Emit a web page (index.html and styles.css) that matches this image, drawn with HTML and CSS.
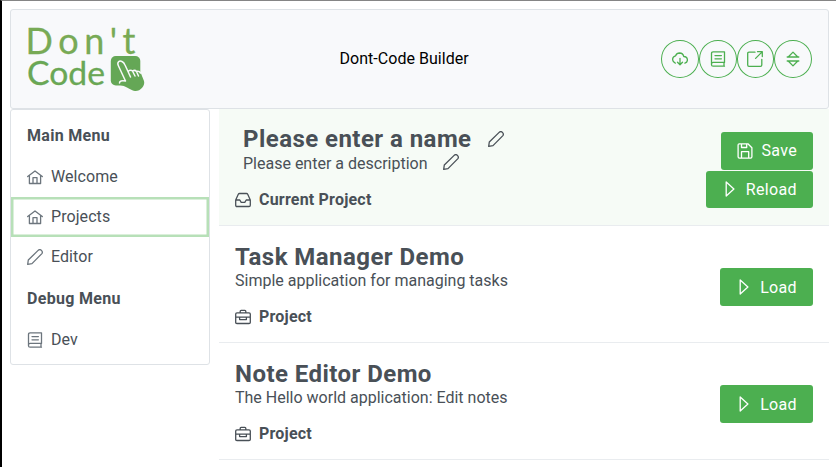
FILE: index.html
```html
<!DOCTYPE html>
<html lang="en">
<head>
<meta charset="utf-8">
<title>Dont-Code Builder</title>
<link rel="stylesheet" href="styles.css">
</head>
<body>
<svg width="0" height="0" class="defs">
  <symbol id="home" viewBox="0 0 16 16"><path d="M.7 7.500 8 2 15.300 7.500M2.400 6.500v8h11.200v-8M6 14.300V8.600h4v5.700"/></symbol>
  <symbol id="pencil" viewBox="0 0 16 16"><path d="M.7 15.300 1.300 11 11.400 1.100Q13 0 14.400 1.400 16 3 14.900 4.600L5 14.600Z"/></symbol>
  <symbol id="book" viewBox="0 0 16 16"><path d="M14.500 11.400V.8H3.100Q1.500.8 1.500 2.400v11.300Q1.500 15.200 3.100 15.200H14.500M14 11.400v3.800M14.500 11.400H3.100Q1.500 11.400 1.500 13.200M5 4.600h6.400M5 7.800h6.400"/></symbol>
  <symbol id="cloud" viewBox="0 0 16 16"><path d="M3.300 12.200Q.6 11.200.6 8.300.7 5.300 3.600 4.800 4.700 2 7.600 2q3.300.1 4.200 3.500 3.600.2 3.600 3.600 0 2.400-2.500 3.100M8 7.300v6.400M5.500 11.300 8 13.800l2.500-2.500"/></symbol>
  <symbol id="external" viewBox="0 0 16 16"><path d="M8 1.200H2Q.7 1.200.7 2.500V14Q.7 15.300 2 15.300h11.500q1.300 0 1.300-1.300V8.300M10.500.7h4.800v4.800M15.100.9 8.600 7.400"/></symbol>
  <symbol id="sort" viewBox="0 0 16 16"><path d="M3.200 6 8 1.100 12.800 6ZM3.200 10 8 14.900 12.800 10ZM2.200 6h11.600M2.200 10h11.600"/></symbol>
  <symbol id="inbox" viewBox="0 0 16 16"><path d="M.7 8 3.300 2.300Q3.700 1.500 4.600 1.500h6.800q.9 0 1.300.8L15.300 8v5.200q0 1.300-1.300 1.300H2Q.7 14.500.7 13.200ZM.7 8h4.100l1.400 2.300h3.600L11.200 8h4.100"/></symbol>
  <symbol id="briefcase" viewBox="0 0 16 16"><path d="M2 3.800h12q1.300 0 1.300 1.300v8.300q0 1.100-1.300 1.100H2Q.7 14.500.7 13.400V5.100Q.7 3.800 2 3.800ZM5.200 3.500V2.300q0-.9.9-.9h3.800q.9 0 .9.900v1.200M.7 8.200h14.600M4.600 8.400v2.200h6.800V8.400"/></symbol>
  <symbol id="save" viewBox="0 0 16 16"><path d="M2.400.8h8.500l4 4v9q0 1.400-1.400 1.400h-11Q1.100 15.200 1.100 13.800V2.200Q1.100.8 2.400.8ZM4.500 15V8.700h7.200V15M4.500 1v3.500h5.200V1"/></symbol>
  <symbol id="play" viewBox="0 0 16 16"><path d="M4.200.9v14.200L11.900 8Z"/></symbol>
</svg>
<div class="app">
  <header class="toolbar">
    <svg class="logo" width="124" height="84" viewBox="-4 -8 124 84">
      <text class="logo-top" x="-1.500" y="28.500" textLength="110">Don't</text>
      <text class="logo-bottom" x="0" y="60.300" textLength="78" lengthAdjust="spacingAndGlyphs">Code</text>
      <rect class="logo-tile" x="83.800" y="31" width="29.500" height="29.500" rx="5"/>
      <path class="logo-hand" d="M91.500 41C89.500 37 92.500 35 95 36.500Q97 37.500 98 40L101 46.500Q103.500 44.500 105.500 46 108 44.500 109.500 46.500 112.500 45.500 114 48.500L117 56C118.500 61 113 66.500 108 66 104.500 65.700 101 62 93.500 60 90.500 58.500 92.500 55 98.500 56Z"/>
      <path class="logo-lines" d="M98.500 56Q92.500 55 92.500 58M98.500 56 91.500 41C89.500 37 92.500 35 95 36.500Q97 37.500 98 40L101 46.500Q103.500 44.500 105.500 46 108 44.500 109.500 46.500 112 45.500 113.500 48M101 46.500l2.500 5.500M105.500 46l2.500 5M109.500 46.500l2 4.500"/>
    </svg>
    <div class="brand">Dont-Code Builder</div>
    <div class="tools">
      <button class="round" aria-label="Download"><svg class="icon"><use href="#cloud"/></svg></button>
      <button class="round" aria-label="Documentation"><svg class="icon"><use href="#book"/></svg></button>
      <button class="round" aria-label="Open"><svg class="icon"><use href="#external"/></svg></button>
      <button class="round" aria-label="Expand"><svg class="icon"><use href="#sort"/></svg></button>
    </div>
  </header>
  <div class="body">
    <nav class="menu">
      <div class="menu-title">Main Menu</div>
      <a class="menu-item"><svg class="icon"><use href="#home"/></svg>Welcome</a>
      <a class="menu-item focused"><svg class="icon"><use href="#home"/></svg>Projects</a>
      <a class="menu-item"><svg class="icon"><use href="#pencil"/></svg>Editor</a>
      <div class="menu-title debug">Debug Menu</div>
      <a class="menu-item"><svg class="icon"><use href="#book"/></svg>Dev</a>
    </nav>
    <main class="list">
      <section class="project current">
        <div class="info">
          <div class="name editable">Please enter a name<svg class="icon"><use href="#pencil"/></svg></div>
          <div class="description editable">Please enter a description<svg class="icon"><use href="#pencil"/></svg></div>
          <div class="kind"><svg class="icon"><use href="#inbox"/></svg>Current Project</div>
        </div>
        <div class="actions">
          <button class="button save"><svg class="icon"><use href="#save"/></svg>Save</button>
          <button class="button reload"><svg class="icon"><use href="#play"/></svg>Reload</button>
        </div>
      </section>
      <section class="project">
        <div class="info">
          <div class="name">Task Manager Demo</div>
          <div class="description">Simple application for managing tasks</div>
          <div class="kind"><svg class="icon"><use href="#briefcase"/></svg>Project</div>
        </div>
        <div class="actions"><button class="button load"><svg class="icon"><use href="#play"/></svg>Load</button></div>
      </section>
      <section class="project">
        <div class="info">
          <div class="name">Note Editor Demo</div>
          <div class="description">The Hello world application: Edit notes</div>
          <div class="kind"><svg class="icon"><use href="#briefcase"/></svg>Project</div>
        </div>
        <div class="actions"><button class="button load"><svg class="icon"><use href="#play"/></svg>Load</button></div>
      </section>
    </main>
  </div>
</div>
</body>
</html>
```
FILE: styles.css
```css
* { box-sizing: border-box; }
body { margin: 0; background: #fff; font-family: Roboto, sans-serif; font-size: 16px; color: #495057; }
.defs { display: block; }
.app { height: 467px; overflow: hidden; border-left: 2px solid #000; border-top: 1px solid #858585; padding: 8px 7px 0 8px; }
.icon { width: 16px; height: 16px; flex: none; fill: none; stroke: currentColor; stroke-width: 1.300; stroke-linejoin: round; stroke-linecap: round; }
.toolbar { height: 99.500px; display: flex; align-items: center; justify-content: space-between; background: #f8f9fb; border: 1px solid #dee2e6; border-bottom-width: 1.500px; border-radius: 3px; padding: 0 16px 0 12px; }
.logo { display: block; overflow: visible; }
.logo-top, .logo-bottom { font-family: Lato, sans-serif; fill: #78aa55; }
.logo-top { font-size: 36px; stroke: #78aa55; stroke-width: .3; }
.logo-bottom { font-size: 32px; fill: #6aa755; stroke: #6aa755; stroke-width: .3; }
.logo-tile, .logo-hand { fill: #65a756; }
.logo-lines { fill: none; stroke: #f8f9fb; stroke-width: 1.500; stroke-linecap: round; stroke-linejoin: round; }
.brand { color: #000; letter-spacing: .04px; }
.tools { display: flex; }
.round { width: 37.700px; height: 38px; padding: 0; display: flex; align-items: center; justify-content: center; border: 1px solid #4caf50; border-radius: 50%; background: transparent; color: #4caf50; }
.body { display: flex; align-items: flex-start; gap: 9px; }
.menu { width: 200px; height: 256px; border: 1px solid #dee2e6; border-radius: 3px; background: #fff; }
.menu-title { height: 47px; padding: 16px 16px 0; line-height: 19px; font-weight: 700; letter-spacing: .3px; }
.menu-title.debug { height: 43px; padding-top: 12px; }
.menu-item { height: 40px; display: flex; align-items: center; gap: 8px; padding: 0 16px; letter-spacing: .07px; }
.menu-item .icon { color: #6c757d; }
.menu-item.focused { box-shadow: inset 0 0 0 2.500px #b7e0b8; }
.list { flex: 1; }
.project { height: 117px; padding: 17px 16px 0; display: flex; align-items: flex-start; justify-content: space-between; border-bottom: 1px solid #e9ecef; }
.project.current { padding-top: 16px; background: #f6fbf6; }
.name { font-size: 24px; line-height: 28px; font-weight: 700; letter-spacing: .45px; }
.description { line-height: 20px; }
.editable { display: flex; align-items: center; gap: 16px; padding-left: 8px; }
.description.editable { margin-top: 1px; gap: 15px; }
.description .icon { margin-top: -4px; }
.kind { margin-top: 16px; display: flex; align-items: center; gap: 8px; line-height: 20px; font-weight: 700; letter-spacing: .2px; }
.actions { height: 76px; margin-top: 6.500px; display: flex; flex-direction: column; align-items: flex-end; justify-content: center; gap: 1px; }
.current .actions { margin-top: 7.500px; }
.button { height: 37.500px; flex: none; display: flex; align-items: center; gap: 8px; padding: 0 16px; border: 0; border-radius: 3px; background: #4caf50; color: #fff; font: 16px Roboto, sans-serif; letter-spacing: .35px; }
```
